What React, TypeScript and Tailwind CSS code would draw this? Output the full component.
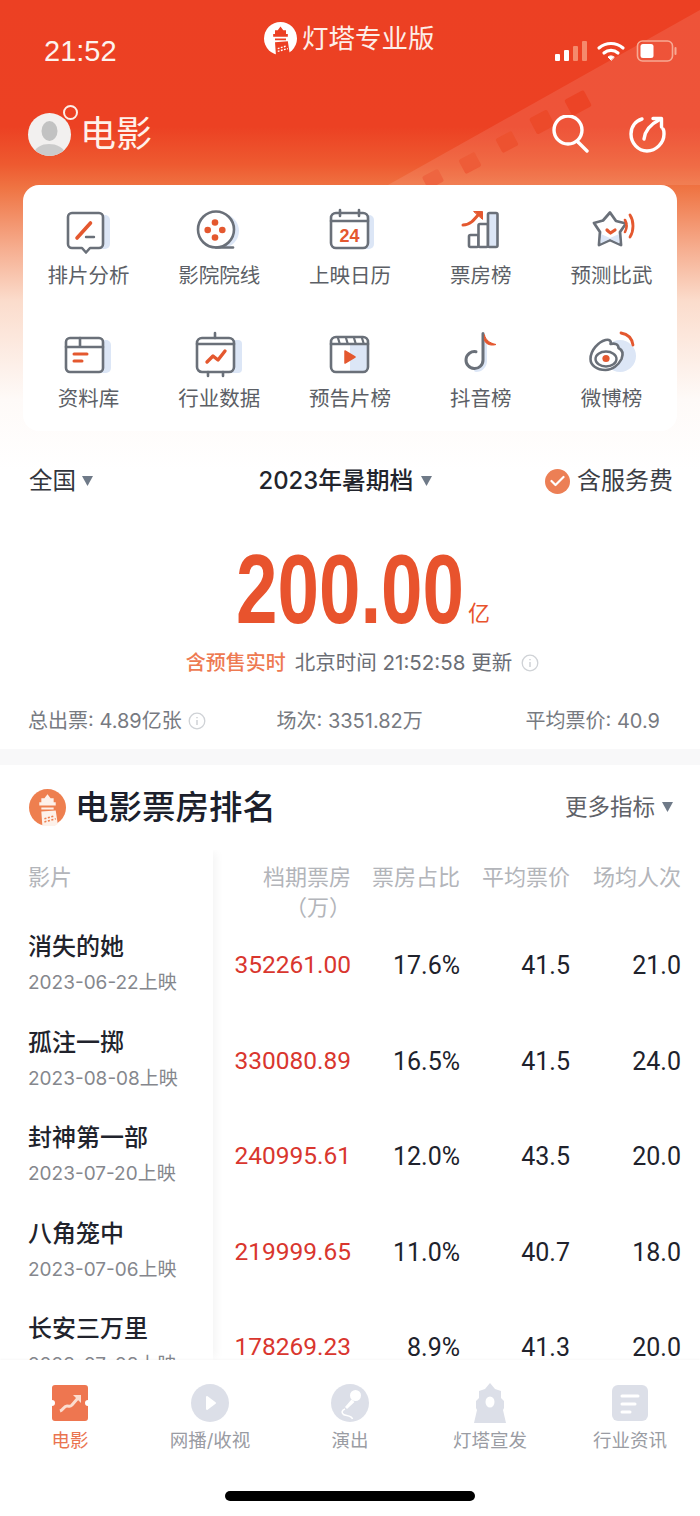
import React from "react";

const G = "#6a7079";
const R = "#e4582f";
const B = "#dce6f6";

function IconFrame({ children }: { children: React.ReactNode }) {
  return (
    <svg width="48" height="48" viewBox="0 0 48 48" fill="none" strokeLinecap="round" strokeLinejoin="round" className="overflow-visible">
      {children}
    </svg>
  );
}

const gridIcons: Record<string, React.ReactNode> = {
  排片分析: (
    <IconFrame>
      <rect x="12" y="8" width="34" height="34" rx="5" fill={B} />
      <path d="M8 6h27a4 4 0 0 1 4 4v27a4 4 0 0 1-4 4H26l-4 4.500-4-4.500H8a4 4 0 0 1-4-4V10a4 4 0 0 1 4-4z" fill="#fff" stroke={G} strokeWidth="2.600" />
      <path d="M13 31 26.500 16" stroke={R} strokeWidth="3.600" />
      <path d="M22 30h8" stroke={G} strokeWidth="2.400" />
    </IconFrame>
  ),
  影院院线: (
    <IconFrame>
      <circle cx="27" cy="24" r="17" fill={B} />
      <circle cx="21" cy="22.500" r="18" fill="#fff" stroke={G} strokeWidth="2.600" />
      <path d="M21 40.500h17" stroke={G} strokeWidth="2.600" />
      <circle cx="20" cy="15.500" r="3.300" fill={R} />
      <circle cx="20" cy="30.500" r="3.300" fill={R} />
      <circle cx="12.700" cy="23" r="3.300" fill={R} />
      <circle cx="27.300" cy="23" r="3.300" fill={R} />
    </IconFrame>
  ),
  上映日历: (
    <IconFrame>
      <rect x="12" y="8" width="36" height="34" rx="5" fill={B} />
      <rect x="5" y="6" width="37" height="35" rx="5" fill="#fff" stroke={G} strokeWidth="2.600" />
      <path d="M5 14h37M14 3v6M33 3v6" stroke={G} strokeWidth="2.600" />
      <text x="23.500" y="35" textAnchor="middle" fontSize="18" fontWeight="700" fill={R} fontFamily="Liberation Sans, sans-serif">24</text>
    </IconFrame>
  ),
  票房榜: (
    <IconFrame>
      <rect x="12" y="28" width="9.500" height="12" rx="1.500" fill="#fff" stroke={G} strokeWidth="2.600" />
      <rect x="21.500" y="17" width="9.500" height="23" rx="1.500" fill="#fff" stroke={G} strokeWidth="2.600" />
      <rect x="31" y="6" width="9.500" height="34" rx="1.500" fill={B} stroke={G} strokeWidth="2.600" />
      <path d="M6 18c7 0 11-5 15-10" stroke={R} strokeWidth="3" />
      <path d="M17 4.500h8.500v7.500z" fill={R} stroke={R} strokeWidth="1" />
    </IconFrame>
  ),
  预测比武: (
    <IconFrame>
      <path d="M22 5.500 28 14l10 2.500-6 8.500 1 13-11-5-11 5 1-13-6-9 9-2.500z" fill="#fff" stroke={G} strokeWidth="2.800" />
      <path d="M12.500 36.500 13 27l9 4 9-4 .5 9.500L22 32z" fill={B} />
      <path d="M19 23c1 1 2 2 3.500 3 1.500-1 3-2 4.500-3" stroke={R} strokeWidth="3.200" />
      <path d="M37 13c2 3.500 2 8 0 12" stroke={R} strokeWidth="2.600" />
      <path d="M42 8c4 6 4 16 0 22" stroke={R} strokeWidth="2.800" />
    </IconFrame>
  ),
  资料库: (
    <IconFrame>
      <rect x="12" y="10" width="35" height="33" rx="5" fill={B} />
      <path d="M6 8h29a4 4 0 0 1 4 4v26a4 4 0 0 1-4 4H6a4 4 0 0 1-4-4V12a4 4 0 0 1 4-4z" fill="#fff" stroke={G} strokeWidth="2.600" />
      <path d="M2 17h37M16 8v9" stroke={G} strokeWidth="2.600" />
      <path d="M10 24h13M10 31h8" stroke={R} strokeWidth="3" />
    </IconFrame>
  ),
  行业数据: (
    <IconFrame>
      <rect x="10" y="10" width="37" height="33" rx="4" fill={B} />
      <rect x="2" y="8" width="37" height="34" rx="5" fill="#fff" stroke={G} strokeWidth="2.600" />
      <path d="M2 14h37M20 3v5M13 42v4M28 42v4" stroke={G} strokeWidth="2.600" />
      <path d="M12 32l6-6 5 4 7-9" stroke={R} strokeWidth="3.400" />
    </IconFrame>
  ),
  预告片榜: (
    <IconFrame>
      <path d="M24 15h18v22a4 4 0 0 1-4 4H24z" fill={B} />
      <rect x="5" y="7" width="37" height="35" rx="5" stroke={G} strokeWidth="2.600" />
      <path d="M5 14h37" stroke={G} strokeWidth="2.600" />
      <path d="M12 8l1.500 5M20 8l1.500 5M28 8l1.500 5M36 8l1.500 5" stroke={G} strokeWidth="2.200" />
      <path d="M19 21l10 6-10 6z" fill={R} stroke={R} strokeWidth="1.500" />
    </IconFrame>
  ),
  抖音榜: (
    <IconFrame>
      <path d="M28 10v21a9 9 0 0 1-9 9" stroke={B} strokeWidth="4" />
      <path d="M26 3.500v26.500a8.500 8.500 0 1 1-7-8.300" stroke={G} strokeWidth="3" />
      <path d="M27.500 5c1 5 5 8 11.500 9.500-5 1.500-10 0-11.500-4z" fill={R} stroke={R} strokeWidth="1" />
    </IconFrame>
  ),
  微博榜: (
    <IconFrame>
      <circle cx="32" cy="26" r="16" fill={B} />
      <path d="M2.500 29c0-9 8-17 15-19 4-1 6 1 5 4 4-1 8 0 8 4 4 2 5 6 3 11-3 6-9 11-16 11-9 0-15-5-15-11z" fill="#fff" stroke={G} strokeWidth="2.600" />
      <ellipse cx="18" cy="29" rx="10.500" ry="7.500" stroke={G} strokeWidth="2.400" />
      <circle cx="18" cy="28.500" r="3.600" fill={R} />
      <path d="M33 3c6 1 11 5 12 12" stroke={R} strokeWidth="2.800" />
    </IconFrame>
  ),
};

const gridItems = ["排片分析", "影院院线", "上映日历", "票房榜", "预测比武", "资料库", "行业数据", "预告片榜", "抖音榜", "微博榜"];

const films = [
  { name: "消失的她", date: "2023-06-22上映", box: "352261.00", share: "17.6%", price: "41.5", people: "21.0" },
  { name: "孤注一掷", date: "2023-08-08上映", box: "330080.89", share: "16.5%", price: "41.5", people: "24.0" },
  { name: "封神第一部", date: "2023-07-20上映", box: "240995.61", share: "12.0%", price: "43.5", people: "20.0" },
  { name: "八角笼中", date: "2023-07-06上映", box: "219999.65", share: "11.0%", price: "40.7", people: "18.0" },
  { name: "长安三万里", date: "2023-07-08上映", box: "178269.23", share: "8.9%", price: "41.3", people: "20.0" },
];

function InfoDot() {
  return (
    <svg width="18" height="18" viewBox="0 0 18 18" fill="none" className="shrink-0">
      <circle cx="9" cy="9" r="7.800" stroke="#cfd2d6" strokeWidth="1.300" />
      <path d="M9 8v5M9 5v1.300" stroke="#cfd2d6" strokeWidth="1.500" />
    </svg>
  );
}

function Caret() {
  return (
    <svg width="11" height="12" viewBox="0 0 11 12" className="shrink-0">
      <path d="M0 1h11L5.500 11z" fill="#6f7a88" />
    </svg>
  );
}

function TowerLogo({ size, bg, fg }: { size: number; bg: string; fg: string }) {
  return (
    <svg width={size} height={size} viewBox="0 0 36 36" className="shrink-0">
      <circle cx="18" cy="18" r="18" fill={bg} />
      <path d="M18 5l3 4h3v4h2v3H10v-3h2V9h3z" fill={fg} />
      <path d="M12 18h12v2H12zM12 22l14-1 2 13-3 2H13z" fill={fg} />
      <path d="M15 29l10-3M15 32l11-3" stroke={bg} strokeWidth="1.500" strokeDasharray="2 1.500" />
    </svg>
  );
}

const tabs: { label: string; icon: React.ReactNode }[] = [
  {
    label: "电影",
    icon: (
      <svg width="38" height="36" viewBox="0 0 38 36">
        <path d="M4 0h30a3 3 0 0 1 3 3v12a3 3 0 0 0 0 6v12a3 3 0 0 1-3 3H4a3 3 0 0 1-3-3V21a3 3 0 0 0 0-6V3a3 3 0 0 1 3-3z" fill="#ee7650" />
        <path d="M9 26c3-1 4-5 7-5s3 1 5-1l6-7" stroke="#fbdccf" strokeWidth="3" fill="none" />
        <path d="M22 10h8v8z" fill="#fbdccf" />
      </svg>
    ),
  },
  {
    label: "网播/收视",
    icon: (
      <svg width="38" height="38" viewBox="0 0 38 38">
        <circle cx="19" cy="19" r="19" fill="#dcdfe8" />
        <path d="M16 13l8 6-8 6z" fill="#fff" stroke="#fff" strokeWidth="2" strokeLinejoin="round" />
      </svg>
    ),
  },
  {
    label: "演出",
    icon: (
      <svg width="38" height="38" viewBox="0 0 38 38">
        <circle cx="19" cy="19" r="19" fill="#dcdfe8" />
        <circle cx="24.500" cy="11.500" r="5.500" fill="#fff" />
        <path d="M20.500 15.500l3 2.500-7.500 7-2-2z" fill="#fff" />
        <path d="M14 25c-3 1-4 4-1.500 5.500s8 .5 9 4.500" stroke="#fff" strokeWidth="1.600" fill="none" />
      </svg>
    ),
  },
  {
    label: "灯塔宣发",
    icon: (
      <svg width="38" height="40" viewBox="0 0 38 40">
        <path d="M19 0l5 6 6 2v7l3 3v7l-1 2 3 13H3l3-13-1-2v-7l3-3V8l6-2z" fill="#dcdfe8" />
        <ellipse cx="19" cy="19" rx="4.500" ry="5.500" fill="#fff" />
      </svg>
    ),
  },
  {
    label: "行业资讯",
    icon: (
      <svg width="36" height="36" viewBox="0 0 36 36">
        <rect width="36" height="36" rx="6" fill="#dcdfe8" />
        <path d="M10 11h16M10 19h13M10 27h8" stroke="#fff" strokeWidth="3" strokeLinecap="round" />
      </svg>
    ),
  },
];

export default function App() {
  return (
    <div className="relative flex h-[1516px] w-[700px] flex-col overflow-hidden bg-white font-['Inter','Noto_Sans_CJK_SC',sans-serif]">
      {/* Header backdrop: gradient and the film strip */}
      <div className="absolute left-0 top-0 h-[470px] w-[700px] bg-[linear-gradient(180deg,#ec4023_0%,#ec4123_27%,#ee5a30_35%,#ef7443_40%,#f6ae90_53%,#fbdccc_64%,#fefaf8_85%,#ffffff_100%)]">
        <div className="absolute left-[388px] top-[10px] h-[175px] w-[312px] bg-white/10 [clip-path:polygon(100%_0,100%_100%,0_100%)]" />
        <div className="absolute left-[424px] top-[172px] h-[14px] w-[18px] rotate-[-28deg] rounded-[2px] bg-[#ee6540]" />
        <div className="absolute left-[461px] top-[155px] h-[16px] w-[18px] rotate-[-28deg] rounded-[2px] bg-[#ee5c38]" />
        <div className="absolute left-[498px] top-[134px] h-[16px] w-[18px] rotate-[-28deg] rounded-[2px] bg-[#ed5230]" />
        <div className="absolute left-[532px] top-[113px] h-[18px] w-[20px] rotate-[-28deg] rounded-[2px] bg-[#ec4a2a]" />
        <div className="absolute left-[567px] top-[94px] h-[18px] w-[22px] rotate-[-28deg] rounded-[2px] bg-[#ec4426]" />
      </div>

      <div className="relative shrink-0">
        {/* Status bar */}
        <div className="flex h-[90px] justify-between pl-[44px] pr-[20px] pt-[34px]">
          <span className="font-['Liberation_Sans',sans-serif] text-[29px] leading-[34px] font-medium text-[#fdf3ee]">21:52</span>
          <div className="flex h-[34px] items-center gap-[9px]">
            <svg width="32" height="22" viewBox="0 0 32 22">
              <rect x="0" y="14" width="5" height="7" rx="1" fill="#fff" />
              <rect x="9" y="10" width="5" height="11" rx="1" fill="#fff" />
              <rect x="18" y="6" width="5" height="15" rx="1" fill="#f58a6c" />
              <rect x="27" y="1" width="5" height="20" rx="1" fill="#f58a6c" />
            </svg>
            <svg width="30" height="22" viewBox="0 0 28 22" fill="none" stroke="#fff" strokeWidth="3.200" strokeLinecap="round">
              <path d="M2 8c7-6 17-6 24 0" />
              <path d="M7 13c4-3.500 10-3.500 14 0" />
              <path d="M14 20l-3-3c2-1.500 4-1.500 6 0z" fill="#fff" strokeWidth="1" />
            </svg>
            <svg width="45" height="22" viewBox="0 0 42 22" fill="none">
              <rect x="1" y="1" width="35" height="20" rx="5" stroke="#f7a993" strokeWidth="1.600" />
              <rect x="4" y="4" width="13" height="14" rx="2.500" fill="#fff" />
              <path d="M39 8v6" stroke="#f7a993" strokeWidth="2" strokeLinecap="round" />
            </svg>
          </div>
        </div>

        {/* Logo sits over the status bar */}
        <div className="absolute left-[264px] top-[20px] flex items-center gap-[5px]">
          <TowerLogo size={33} bg="#fff" fg="#ec4023" />
          <span className="text-[26.500px] leading-[36px] text-[#fdeee8]">灯塔专业版</span>
        </div>

        {/* Title row */}
        <div className="flex h-[95px] items-center justify-between pb-[7px] pl-[28px] pr-[33px]">
          <div className="flex items-center gap-[9px]">
            <div className="relative h-[43px] w-[43px]">
              <div className="h-[43px] w-[43px] overflow-hidden rounded-full bg-[#f2f0ef]">
                <svg width="43" height="43" viewBox="0 0 43 43">
                  <ellipse cx="21.500" cy="18" rx="8" ry="10" fill="#c2c2c2" />
                  <path d="M5 43c1-9 9-12 16-12s16 3 17 12z" fill="#cbcbcb" />
                </svg>
              </div>
              <span className="absolute right-[-7px] top-[-8px] h-[15px] w-[15px] rounded-full border-2 border-[#fdeee8] bg-[#ec4023]" />
            </div>
            <span className="text-[36px] leading-[44px] text-[#fff1ea]">电影</span>
          </div>
          <div className="flex items-center gap-[39px]">
            <svg width="38" height="38" viewBox="0 0 38 38" fill="none" stroke="#fff" strokeWidth="3.400" strokeLinecap="round">
              <circle cx="16" cy="15" r="14" />
              <path d="M26 27l9 9" />
            </svg>
            <svg width="38" height="38" viewBox="0 0 38 38" fill="none" stroke="#fff" strokeWidth="3.400" strokeLinecap="round" strokeLinejoin="round">
              <path d="M13 4C6 6 2 12 2 19c0 9 7 17 16 17s17-8 17-17c0-2 0-4-1-5" />
              <path d="M15 24c1-8 7-15 15-19" />
              <path d="M24 3.500h8.500v8.500" />
            </svg>
          </div>
        </div>

        {/* Entry grid */}
        <div className="mx-[23px] h-[246px] rounded-[16px] bg-white pt-[22px]">
          <div className="grid grid-cols-5 gap-y-[41px]">
            {gridItems.map((label) => (
              <div key={label} className="flex flex-col items-center">
                <div className="h-[48px] w-[48px]">{gridIcons[label]}</div>
                <span className="mt-[7px] text-[20.500px] leading-[27px] text-[#5c5f66]">{label}</span>
              </div>
            ))}
          </div>
        </div>
      </div>

      {/* Filter row */}
      <div className="relative mt-[31px] flex h-[38px] shrink-0 items-center justify-between pl-[29px] pr-[27px]">
        <div className="flex items-center gap-[6px]">
          <span className="text-[23.500px] leading-[30px] text-[#33363d]">全国</span>
          <Caret />
        </div>
        <div className="ml-[53px] flex items-center gap-[8px]">
          <span className="text-[23.800px] leading-[30px] font-medium text-[#22242c]">2023年暑期档</span>
          <Caret />
        </div>
        <div className="flex items-center gap-[7px]">
          <span className="flex h-[25px] w-[25px] items-center justify-center rounded-full bg-[#ec7f55]">
            <svg width="15" height="12" viewBox="0 0 15 12" fill="none" stroke="#fff" strokeWidth="2.200" strokeLinecap="round" strokeLinejoin="round">
              <path d="M1.500 6l4 4 8-8" />
            </svg>
          </span>
          <span className="text-[24px] leading-[30px] text-[#3b3e45]">含服务费</span>
        </div>
      </div>

      {/* Headline figure */}
      <div className="mt-[37px] flex shrink-0 items-end justify-center pl-[26px]">
        <span className="block w-[228px] origin-left scale-x-[0.753] whitespace-nowrap font-['Liberation_Sans',sans-serif] text-[99px] leading-[104px] font-bold text-[#e8532d]">200.00</span>
        <span className="mb-[15px] ml-[4px] text-[22px] leading-[26px] text-[#e8532d]">亿</span>
      </div>
      <div className="mt-[8px] flex h-[28px] shrink-0 items-center justify-center gap-[9px] pl-[25px]">
        <span className="text-[20px] leading-[28px] font-medium text-[#ee7a52]">含预售实时</span>
        <span className="text-[20.500px] leading-[28px] text-[#6b6e75]">北京时间 21:52:58 更新</span>
        <InfoDot />
      </div>

      {/* Summary row */}
      <div className="mt-[29px] flex h-[30px] shrink-0 items-center justify-between pl-[28px] pr-[40px] text-[20px] leading-[28px] text-[#777a81]">
        <span className="flex items-center gap-[6px]">总出票: 4.89亿张 <InfoDot /></span>
        <span className="mr-[32px]">场次: 3351.82万</span>
        <span>平均票价: 40.9</span>
      </div>

      <div className="mt-[13px] h-[16px] shrink-0 bg-[#f8f8f9]" />

      {/* Ranking heading */}
      <div className="mt-[20px] flex h-[44px] shrink-0 items-center justify-between pl-[29px] pr-[27px]">
        <div className="flex items-center gap-[9px]">
          <TowerLogo size={37} bg="#ee7f4f" fg="#fdf1ea" />
          <span className="text-[33.500px] leading-[44px] font-medium text-[#1c1f2c]">电影票房排名</span>
        </div>
        <div className="flex items-center gap-[7px]">
          <span className="text-[22.500px] leading-[30px] text-[#5f6268]">更多指标</span>
          <Caret />
        </div>
      </div>

      {/* Ranking table */}
      <div className="mt-[21px] flex min-h-0 flex-1 overflow-hidden">
        <div className="w-[213px] shrink-0 pl-[28px] shadow-[6px_0_8px_-2px_rgba(0,0,0,0.04)]">
          <div className="h-[72px] pt-[12px] text-[22px] leading-[30px] text-[#b3b5ba]">影片</div>
          {films.map((f) => (
            <div key={f.name} className="h-[95.500px]">
              <div className="pt-[8px] text-[24px] leading-[34px] font-medium text-[#21232c]">{f.name}</div>
              <div className="mt-[5px] text-[19px] leading-[28px] text-[#85878d]">{f.date}</div>
            </div>
          ))}
        </div>
        <div className="flex-1 pr-[19px]">
          <div className="grid h-[72px] grid-cols-[138px_109px_110px_1fr] pt-[12px] text-right text-[22px] leading-[30px] text-[#b3b5ba]">
            <div className="whitespace-pre-line">{"档期票房\n（万）"}</div>
            <div>票房占比</div>
            <div>平均票价</div>
            <div>场均人次</div>
          </div>
          {films.map((f) => (
            <div key={f.name} className="grid h-[95.500px] grid-cols-[138px_109px_110px_1fr] items-center pb-[8px] text-right font-['Roboto',sans-serif] text-[25px] text-[#20222c]">
              <div className="text-[24.500px] text-[#d9362e]">{f.box}</div>
              <div>{f.share}</div>
              <div>{f.price}</div>
              <div>{f.people}</div>
            </div>
          ))}
        </div>
      </div>

      {/* Tab bar */}
      <div className="relative h-[156px] shrink-0 bg-white shadow-[0_-1px_2px_rgba(0,0,0,0.03)]">
        <div className="grid grid-cols-5 pt-[21px]">
          {tabs.map((t, i) => (
            <div key={t.label} className="flex flex-col items-center">
              <div className="flex h-[44px] items-center">{t.icon}</div>
              <span className={`mt-[1px] text-[18.500px] leading-[28px] ${i === 0 ? "text-[#ea7450]" : "text-[#9a9ca3]"}`}>{t.label}</span>
            </div>
          ))}
        </div>
        <div className="absolute bottom-[15px] left-[225px] h-[10px] w-[250px] rounded-full bg-black" />
      </div>
    </div>
  );
}
